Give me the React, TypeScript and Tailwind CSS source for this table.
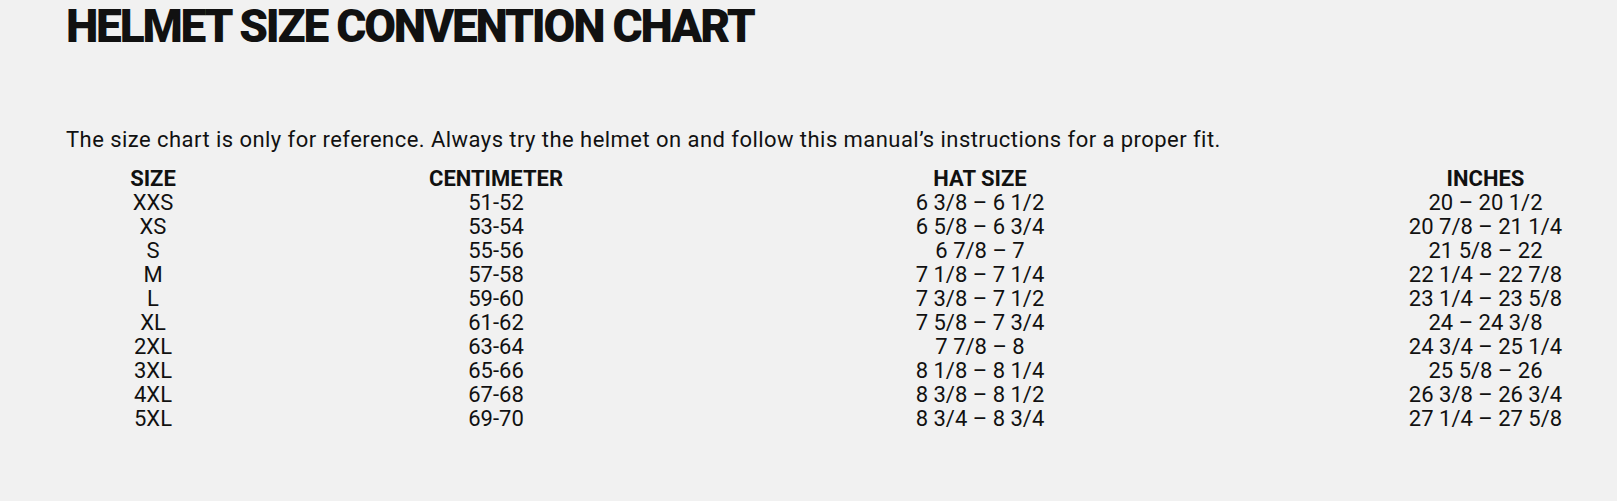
const rows = [
  ["XXS", "51-52", "6 3/8 – 6 1/2", "20 – 20 1/2"],
  ["XS", "53-54", "6 5/8 – 6 3/4", "20 7/8 – 21 1/4"],
  ["S", "55-56", "6 7/8 – 7", "21 5/8 – 22"],
  ["M", "57-58", "7 1/8 – 7 1/4", "22 1/4 – 22 7/8"],
  ["L", "59-60", "7 3/8 – 7 1/2", "23 1/4 – 23 5/8"],
  ["XL", "61-62", "7 5/8 – 7 3/4", "24 – 24 3/8"],
  ["2XL", "63-64", "7 7/8 – 8", "24 3/4 – 25 1/4"],
  ["3XL", "65-66", "8 1/8 – 8 1/4", "25 5/8 – 26"],
  ["4XL", "67-68", "8 3/8 – 8 1/2", "26 3/8 – 26 3/4"],
  ["5XL", "69-70", "8 3/4 – 8 3/4", "27 1/4 – 27 5/8"],
];

const headers = ["SIZE", "CENTIMETER", "HAT SIZE", "INCHES"];

export default function App() {
  return (
    <div className="min-h-[501px] w-full overflow-hidden bg-[#f1f1f1] text-[#111] font-['Roboto',sans-serif]">
      <div className="pl-[66px] pt-[3px]">
        <h1 className="text-[46px] leading-none font-black tracking-[-2.2px] uppercase">
          Helmet Size Convention Chart
        </h1>

        <p className="mt-[77px] text-[22px] leading-[27.5px] tracking-[0.45px]">
          The size chart is only for reference. Always try the helmet on and follow this manual’s instructions for a proper fit.
        </p>

        {/* Table */}
        <div className="mt-[13px] grid grid-cols-[174px_512px_456px_1fr] text-[22px] leading-[24px]">
          {headers.map((h, i) => (
            <div key={h} className={`text-center font-bold ${i === 3 ? "pl-[146px]" : ""}`}>
              {h}
            </div>
          ))}
          {rows.map((r) =>
            r.map((cell, i) => (
              <div key={r[0] + i} className={`text-center ${i === 3 ? "pl-[146px]" : ""}`}>
                {cell}
              </div>
            ))
          )}
        </div>
      </div>
    </div>
  );
}
